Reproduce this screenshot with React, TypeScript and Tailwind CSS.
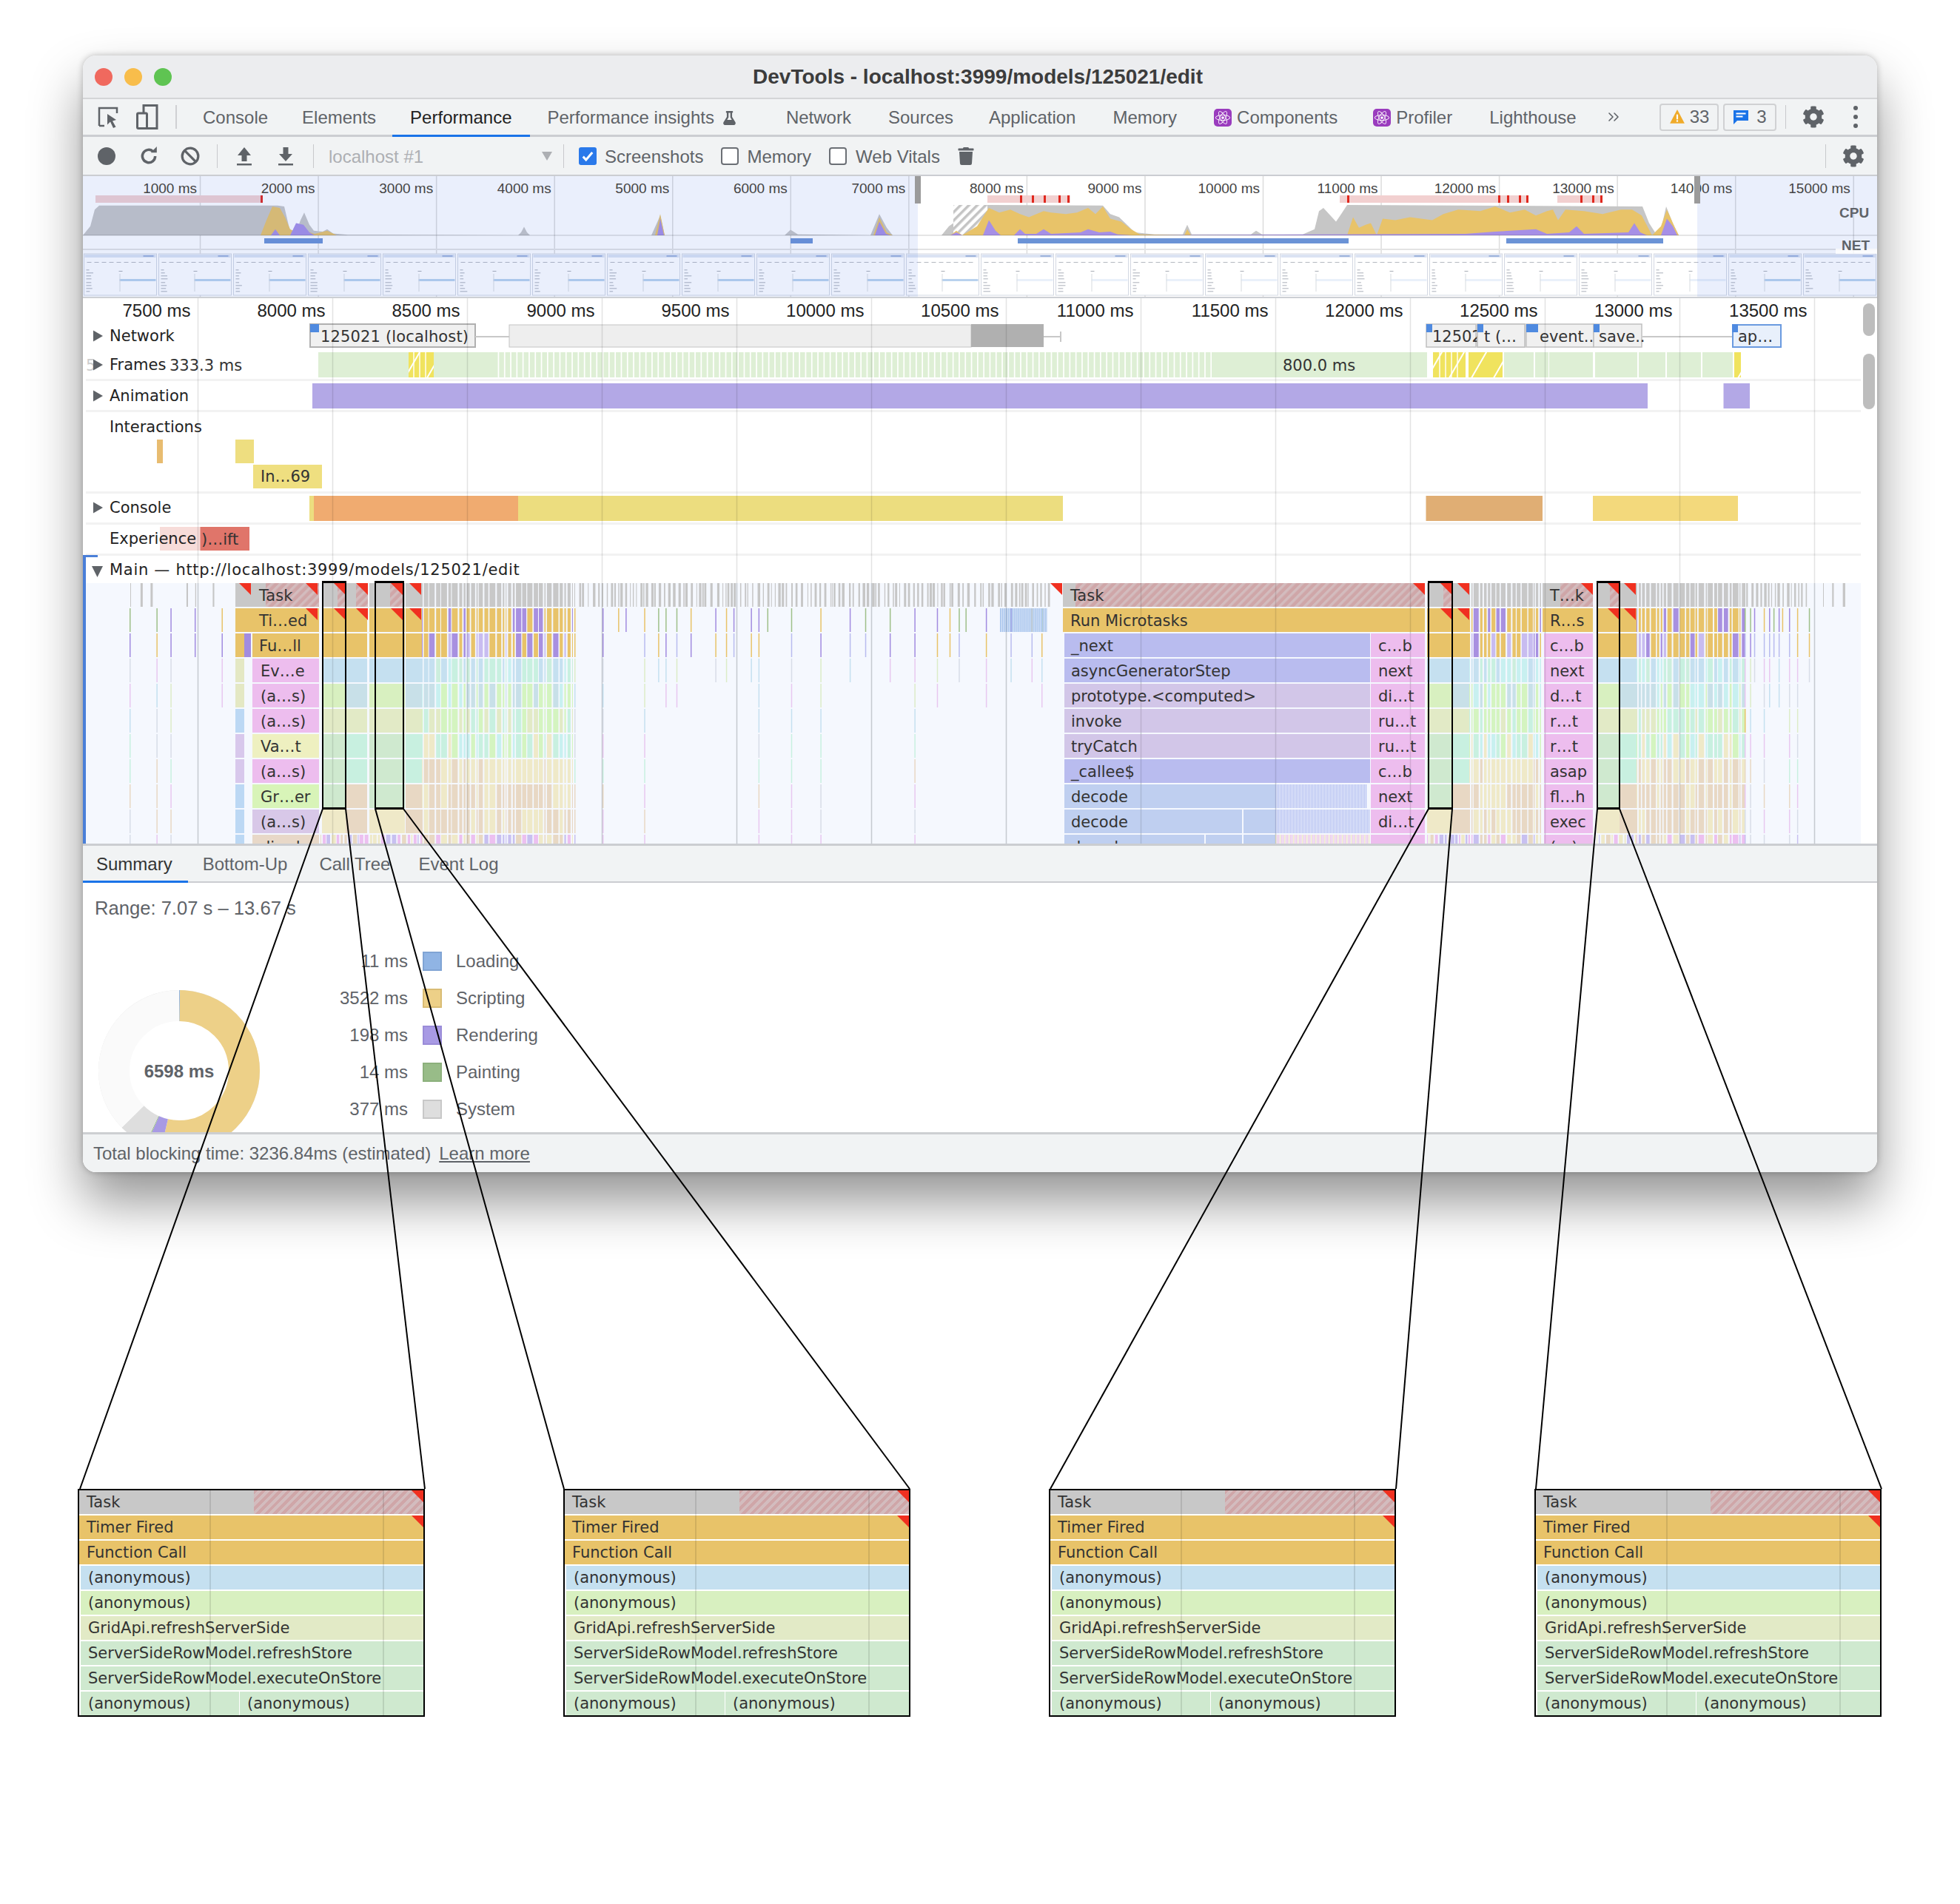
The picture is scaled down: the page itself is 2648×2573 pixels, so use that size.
import { FaCog, FaFlask, FaReact, FaTrash } from 'react-icons/fa';
import { ChevronsRight } from 'lucide-react';

// helpers for the timeline charts, all x/y in page pixels
const rowY = (r: number) => 788 + 34 * r;
const xs = (k: number) => 267.5 + 182 * k;

function rng(seed: number) {
  let s = seed;
  return () => {
    s = (s * 16807) % 2147483647;
    return (s - 1) / 2147483646;
  };
}

function area(pts: number[][], fill: string) {
  const p = pts.map(([x, f]) => `${x},${318 - f * 41}`).join(' ');
  return <polygon points={`${pts[0][0]},318 ${p} ${pts[pts.length - 1][0]},318`} fill={fill} />;
}

const GRAY = [[112, 0], [122, 0.3], [128, 0.85], [134, 0.98], [360, 0.98], [375, 0.98], [384, 0.95], [392, 0.12], [400, 0.1], [406, 0.5], [411, 0.75], [418, 0.35], [424, 0.15], [436, 0.12], [442, 0.2], [450, 0.06], [470, 0.02], [700, 0], [704, 0.1], [708, 0.28], [712, 0.1], [716, 0], [880, 0], [892, 0.65], [898, 0], [1060, 0], [1068, 0.18], [1078, 0.03], [1176, 0], [1188, 0.7], [1198, 0.25], [1206, 0], [1272, 0], [1282, 0.3], [1288, 0.4], [1334, 1], [1490, 0.98], [1500, 0.7], [1512, 0.6], [1533, 0.1], [1560, 0.03], [1598, 0.03], [1604, 0.35], [1610, 0.03], [1690, 0.03], [1697, 0.15], [1705, 0.03], [1760, 0.03], [1776, 0.2], [1782, 0.8], [1788, 0.9], [1805, 0.45], [1812, 0.7], [1820, 1], [2219, 0.95], [2228, 0.4], [2236, 0.1], [2245, 0.3], [2251, 0.95], [2260, 0.4], [2268, 0], [2536, 0]];
const YELLOW = [[352, 0], [360, 0.5], [368, 0.95], [378, 0.9], [385, 0.6], [392, 0.2], [400, 0.1], [405, 0.2], [412, 0.15], [425, 0.05], [442, 0.15], [455, 0], [885, 0], [892, 0.7], [898, 0], [1180, 0], [1188, 0.6], [1198, 0.1], [1206, 0], [1284, 0], [1292, 0.15], [1300, 0], [1320, 0.3], [1336, 0.9], [1350, 0.75], [1365, 0.85], [1378, 0.7], [1390, 0.6], [1410, 0.8], [1420, 0.75], [1440, 0.7], [1455, 0.75], [1470, 0.9], [1480, 0.7], [1490, 0.95], [1500, 0.55], [1515, 0.45], [1528, 0.2], [1540, 0.03], [1600, 0], [1604, 0.2], [1609, 0], [1820, 0], [1828, 0.6], [1836, 0.25], [1845, 0.35], [1852, 0.4], [1860, 0], [1868, 0.55], [1885, 0.5], [1905, 0.6], [1935, 0.5], [1950, 0.7], [1970, 0.85], [2000, 0.8], [2020, 0.95], [2040, 0.75], [2060, 0.85], [2075, 0.65], [2090, 0.8], [2098, 0.85], [2105, 0.5], [2115, 0.85], [2140, 0.8], [2165, 0.7], [2190, 0.85], [2205, 0.85], [2218, 0.65], [2232, 0], [2244, 0.3], [2252, 0.85], [2262, 0.3], [2268, 0]];
const PURPLE = [[366, 0], [372, 0.2], [378, 0], [392, 0], [400, 0.4], [410, 0.35], [418, 0.1], [425, 0], [888, 0], [892, 0.55], [897, 0], [1182, 0], [1188, 0.45], [1197, 0.05], [1203, 0], [1284, 0], [1292, 0.1], [1300, 0], [1328, 0], [1336, 0.5], [1345, 0.15], [1352, 0], [1370, 0], [1378, 0.2], [1385, 0.05], [1400, 0.05], [1410, 0.2], [1420, 0.05], [1460, 0.1], [1470, 0.2], [1485, 0.1], [1500, 0.12], [1510, 0.03], [1530, 0], [1980, 0.05], [2020, 0.12], [2075, 0.2], [2090, 0.05], [2120, 0.1], [2130, 0.3], [2140, 0.05], [2200, 0.1], [2208, 0.4], [2216, 0.1], [2225, 0], [2244, 0], [2252, 0.55], [2260, 0.3], [2266, 0]];

const LONG_TASKS = [[129, 355], [1334, 1446], [1810, 2064], [2104, 2163]];
const RED_MARKS = [352, 1378, 1394, 1410, 1430, 1442, 1820, 2024, 2036, 2052, 2062, 2135, 2151, 2162];

function Thumb({ x }: { x: number }) {
  const r = rng(Math.round(x) + 7);
  return (
    <g>
      <rect x={x} y={343} width={98} height={56} fill="#fff" stroke="#d3d8e2" strokeWidth={1} />
      <rect x={x + 1} y={344} width={96} height={4} fill="#dbe3f3" />
      <rect x={x + 80} y={345} width={14} height={2} fill="#9fb4dc" />
      {[0, 1, 2, 3, 4, 5, 6, 7, 8].map((i) => (
        <rect key={i} x={x + 4 + i * 10} y={354} width={6} height={1} fill="#b4b8c0" />
      ))}
      {[364, 368, 372, 376, 381, 385, 389, 393].map((y) => (
        <rect key={y} x={x + 3} y={y} width={4 + r() * 6} height={1.5} fill="#c6c9d0" />
      ))}
      <rect x={x + 47} y={366} width={5} height={1} fill="#a8acb4" />
      <rect x={x + 48} y={377} width={49} height={3} fill="#b9d2ee" opacity={x > 1240 && x < 2240 ? 0.3 : 1} />
      <rect x={x + 48} y={370} width={1} height={24} fill="#d8dbe0" />
    </g>
  );
}

function Overview() {
  const labels = [];
  for (let i = 1; i <= 15; i++) labels.push(i);
  const thumbs = [];
  for (let i = 0; i < 24; i++) thumbs.push(113.5 + i * 101);
  return (
    <svg viewBox="112 238 2424 165" className="block h-[165px] w-[2424px] shrink-0">
      <defs>
        <pattern id="gr" width="8" height="8" patternUnits="userSpaceOnUse" patternTransform="rotate(45)">
          <rect width="8" height="8" fill="#fff" />
          <rect width="3.5" height="8" fill="#c4c4c4" />
        </pattern>
      </defs>
      <rect x={112} y={238} width={2424} height={165} fill="#fff" />
      {labels.map((i) => (
        <line key={i} x1={111 + 159.55 * i} x2={111 + 159.55 * i} y1={238} y2={403} stroke="#dcdcdc" strokeWidth={1.5} />
      ))}
      {LONG_TASKS.map(([a, b]) => (
        <rect key={a} x={a} y={264} width={b - a} height={10} fill="#f2d0d0" />
      ))}
      {RED_MARKS.map((x) => (
        <rect key={x} x={x} y={264} width={3} height={10} fill="#e0281e" />
      ))}
      {area(GRAY, '#c6c6c6')}
      <rect x={1288} y={277} width={46} height={41} fill="url(#gr)" />
      {area(YELLOW, '#e8c369')}
      {area(PURPLE, '#a68fe6')}
      <rect x={112} y={317} width={2424} height={2} fill="#000" opacity={0.1} />
      {[[357, 436], [1068, 1098], [1375, 1822], [2035, 2247]].map(([a, b]) => (
        <rect key={a} x={a} y={322} width={b - a} height={7} fill="#6b93d6" />
      ))}
      <rect x={112} y={336} width={2424} height={2} fill="#e3e3e3" />
      {thumbs.map((x) => (
        <Thumb key={x} x={x} />
      ))}
      <rect x={112} y={238} width={1128} height={165} fill="#3f71e0" opacity={0.11} />
      <rect x={2293} y={238} width={243} height={165} fill="#3f71e0" opacity={0.11} />
      <rect x={112} y={401} width={2424} height={2} fill="#cdd0d4" />
      <g className="fill-[#444] text-[19px]">
        {labels.map((i) => (
          <text key={i} x={111 + 159.55 * i - 4.5} y={261} textAnchor="end">
            {i * 1000} ms
          </text>
        ))}
      </g>
      <rect x={1236} y={238} width={8} height={37} fill="#9b9b9b" />
      <rect x={2289} y={238} width={8} height={37} fill="#9b9b9b" />
      <rect x={2480} y={336} width={56} height={7} fill="#fff" opacity={0.8} />
      <g className="fill-[#5f6368] text-[19px] font-bold">
        <text x={2485} y={294}>CPU</text>
        <text x={2488} y={338}>NET</text>
      </g>
    </svg>
  );
}

type Bar = [number, number, number, string, string?];

const STACK_ROWS: [string, string][] = [
  ['#c8c8c8', '#c8c8c8'],
  ['#e8c369', '#e8c369'],
  ['#e8c369', '#e8c369'],
  ['#c5e0f0', '#c5e0f0'],
  ['#d8f0c0', '#c8e0e8'],
  ['#e2eac6', '#e2eac6'],
  ['#cfe9cf', '#c8f0e0'],
  ['#cfe9cf', '#c8f0e0'],
  ['#cfe9cf', '#e8d8c4'],
  ['#efe9c8', '#e8d8c4'],
];

function stack(x0: number, xm: number, x1: number): Bar[] {
  const out: Bar[] = [];
  STACK_ROWS.forEach(([a, b], r) => {
    if (xm > x0) out.push([x0, xm, r, a]);
    if (x1 > xm) out.push([xm, x1, r, b]);
  });
  return out;
}

const LEFT_COL: Bar[] = [
  [318, 431, 0, '#c8c8c8'],
  [318, 431, 1, '#e8c369'],
  [318, 330, 2, '#e8c369'],
  [330, 339, 2, '#a28ce0'],
  [341, 431, 2, '#e8c369'],
  [318, 330, 3, '#e4e8c4'],
  [318, 330, 4, '#e4e8c4'],
  [318, 330, 5, '#bcd8f4'],
  [318, 330, 6, '#d8c8ec'],
  [318, 330, 7, '#d8c8ec'],
  [318, 330, 8, '#bcd8f4'],
  [318, 330, 9, '#bcd8f4'],
  [318, 330, 10, '#bcd8f4'],
  [341, 431, 3, '#edbdee'],
  [341, 431, 4, '#edbdee'],
  [341, 431, 5, '#edbdee'],
  [341, 431, 6, '#eef0c0'],
  [341, 431, 7, '#edbdee'],
  [341, 431, 8, '#d8f4b8'],
  [341, 431, 9, '#d8c8e8'],
  [341, 431, 10, '#e8d8c8'],
];

const MID_COL: Bar[] = [
  [1436, 1925, 0, '#c8c8c8'],
  [1436, 1925, 1, '#e8c369'],
  [1438, 1851, 2, '#b9bcef'],
  [1438, 1851, 3, '#b9bcef'],
  [1438, 1851, 4, '#d2c6e8'],
  [1438, 1851, 5, '#d2c6e8'],
  [1438, 1851, 6, '#d2c6e8'],
  [1438, 1851, 7, '#b9bcef'],
  [1438, 1723, 8, '#bfcff0'],
  [1438, 1678, 9, '#bfcff0'],
  [1680, 1723, 9, '#bfcff0'],
  [1438, 1627, 10, '#bfcff0'],
  [1629, 1678, 10, '#bfcff0'],
  [1680, 1723, 10, '#bfcff0'],
  [1852, 1925, 2, '#edbdee'],
  [1852, 1925, 3, '#edbdee'],
  [1852, 1925, 4, '#edbdee'],
  [1852, 1925, 5, '#edbdee'],
  [1852, 1925, 6, '#edbdee'],
  [1852, 1925, 7, '#edbdee'],
  [1852, 1925, 8, '#edbdee'],
  [1852, 1925, 9, '#edbdee'],
  [1852, 1925, 10, '#edbdee'],
];

const RIGHT_COL: Bar[] = [
  [2084, 2152, 0, '#c8c8c8'],
  [2084, 2152, 1, '#e8c369'],
  ...[2, 3, 4, 5, 6, 7, 8, 9, 10].map((r): Bar => [2086, 2152, r, '#edbdee']),
];

const FLAME_TEXT: [number, number, string][] = [
  [350, 0, 'Task'], [350, 1, 'Ti…ed'], [350, 2, 'Fu…ll'], [352, 3, 'Ev…e'], [352, 4, '(a…s)'], [352, 5, '(a…s)'], [352, 6, 'Va…t'], [352, 7, '(a…s)'], [352, 8, 'Gr…er'], [352, 9, '(a…s)'], [352, 10, 'di…d'],
  [1446, 0, 'Task'], [1446, 1, 'Run Microtasks'], [1447, 2, '_next'], [1447, 3, 'asyncGeneratorStep'], [1447, 4, 'prototype.<computed>'], [1447, 5, 'invoke'], [1447, 6, 'tryCatch'], [1447, 7, '_callee$'], [1447, 8, 'decode'], [1447, 9, 'decode'], [1447, 10, 'decode'],
  [1862, 2, 'c…b'], [1862, 3, 'next'], [1862, 4, 'di…t'], [1862, 5, 'ru…t'], [1862, 6, 'ru…t'], [1862, 7, 'c…b'], [1862, 8, 'next'], [1862, 9, 'di…t'], [1862, 10, 'a…c'],
  [2094, 0, 'T…k'], [2094, 1, 'R…s'], [2094, 2, 'c…b'], [2094, 3, 'next'], [2094, 4, 'd…t'], [2094, 5, 'r…t'], [2094, 6, 'r…t'], [2094, 7, 'asap'], [2094, 8, 'fl…h'], [2094, 9, 'exec'], [2094, 10, '(…)'],
];

const DENSE_PALETTE: string[][] = [
  ['#c8c8c8'],
  ['#e8c369', '#e8c369', '#e8c369', '#e8c369', '#a890e0'],
  ['#e8c369', '#e8c369', '#e8c369', '#a890e0', '#c8bcf0'],
  ['#c5e0f0', '#c8f0e0', '#c8f0f0', '#cceedd'],
  ['#c8e0e8', '#d4f4c0', '#c8f0f0', '#d4f4c0'],
  ['#d4f4c0', '#c8f0e0', '#e2eac6', '#d4f4c0'],
  ['#d4f4c0', '#c8f0e0', '#c8f0f0', '#efe9c8'],
  ['#efe9c8', '#e8d8c4', '#efe9c8'],
  ['#e8d8c4', '#efe9c8', '#e8d8c4'],
  ['#e8d8c4', '#efe9c8', '#e8d8c4'],
  ['#ecc0f0', '#c8c0f0', '#efe9c8', '#e8d8c4'],
];

// vertically aligned thin slices, like the small tasks in a flame chart
function denseSlices(seed: number, x0: number, x1: number, maxW: number, depth: number) {
  const r = rng(seed);
  const out: Bar[] = [];
  let x = x0;
  while (x < x1) {
    const w = 1 + r() * maxW;
    const d = depth > 10 ? 11 : Math.floor(depth * (0.4 + r() * 0.6));
    for (let row = 0; row < d; row++) {
      const pal = DENSE_PALETTE[row];
      out.push([x, Math.min(x + w, x1), row, pal[Math.floor(r() * pal.length)]]);
    }
    x += w + 1 + r() * 1.2;
  }
  return out;
}

const SPARSE_PALETTE: string[][] = [
  ['#c4c4c4'],
  ['#e8c369', '#9fc08a', '#a28ce0'],
  ['#a28ce0', '#e8c369', '#b9bcef'],
  ['#d8dde8', '#c5e0f0', '#dcecc8', '#e8c8f0'],
  ['#d8dde8', '#c5e0f0', '#dcecc8', '#e8c8f0'],
  ['#d8dde8', '#c5e0f0', '#dcecc8', '#e8c369'],
  ['#d8dde8', '#c8f0e0', '#e8c8f0'],
  ['#d8dde8', '#c8f0e0', '#e8d8c4'],
  ['#d8dde8', '#e8d8c4', '#e8c8f0'],
  ['#d8dde8', '#e8d8c4', '#e8c8f0'],
  ['#d8dde8', '#e8c8f0', '#c8c0f0'],
];

function sparseSlices(seed: number, x0: number, x1: number, step: number) {
  const r = rng(seed);
  const out: Bar[] = [];
  let x = x0;
  while (x < x1) {
    const d = r() < 0.4 ? 11 : 2 + Math.floor(r() * 4);
    for (let row = 1; row < d; row++) {
      const pal = SPARSE_PALETTE[row];
      out.push([x, x + 1.5, row, pal[Math.floor(r() * pal.length)]]);
    }
    x += step * (0.4 + r() * 1.4);
  }
  return out;
}

// the Task row is far busier than the rows below it
function taskLines(seed: number, x0: number, x1: number, step: number) {
  const r = rng(seed);
  const out: Bar[] = [];
  let x = x0;
  while (x < x1) {
    const w = 1 + r() * 2.5;
    out.push([x, x + w, 0, '#c6c6c6']);
    x += w + step * (0.2 + r() * 1.6);
  }
  return out;
}

const onlyRow10 = (bars: Bar[]) => bars.filter((b) => b[2] === 10);

const FLAME_BARS: Bar[] = [
  ...taskLines(9, 176, 300, 26),
  ...sparseSlices(11, 175, 300, 26),
  ...LEFT_COL,
  ...stack(435, 467, 496),
  ...stack(499, 547, 547),
  ...stack(548, 548, 570),
  ...onlyRow10(denseSlices(19, 433, 570, 5, 11)),
  ...denseSlices(21, 570, 774, 7, 11),
  ...taskLines(22, 776, 1419, 3.4),
  ...sparseSlices(23, 776, 1420, 22),
  ...MID_COL,
  ...RIGHT_COL,
  ...stack(1928, 1962, 1985),
  ...stack(2157, 2188, 2211),
  ...onlyRow10(denseSlices(29, 1928, 1985, 5, 11)),
  ...onlyRow10(denseSlices(30, 2157, 2211, 5, 11)),
  ...denseSlices(31, 1985, 2082, 7, 11),
  ...denseSlices(37, 2211, 2357, 7, 11),
  ...taskLines(39, 2357, 2445, 3),
  ...sparseSlices(41, 2357, 2449, 9),
  ...taskLines(43, 2463, 2493, 9),
];

const TRIANGLES = [[339, 0], [429, 0], [429, 1], [467, 0], [467, 1], [497, 0], [497, 1], [544, 0], [544, 1], [569, 0], [569, 1], [1435, 0], [1925, 0], [1962, 0], [1962, 1], [1985, 0], [1985, 1], [2152, 0], [2188, 0], [2188, 1], [2210, 0], [2210, 1]];
const HATCHES = [[359, 431], [456, 467], [481, 497], [527, 544], [1453, 1925], [1950, 1962], [2108, 2152], [2175, 2188]];

function TrackLabel({ y, label, open, x = 148 }: { y: number; label: string; open?: boolean; x?: number }) {
  return (
    <g>
      {open === false && <polygon points={`126,${y - 7.5} 139,${y} 126,${y + 7.5}`} fill="#5f6368" />}
      {open === true && <polygon points={`124,${y - 5} 139,${y - 5} 131.5,${y + 10}`} fill="#5f6368" />}
      <text x={x} y={y + 7} fill="#222">{label}</text>
    </g>
  );
}

function Timeline() {
  const grid = [];
  for (let k = 0; k <= 12; k++) grid.push(xs(k));
  const seps = [513, 555, 665, 707, 749];
  const frameStripes = [];
  for (let x = 666; x < 1637; x += 8.3) frameStripes.push(x);
  return (
    <svg viewBox="112 403 2424 737" className="block h-[737px] w-[2424px] shrink-0">
      <defs>
        <pattern id="hatch" width="8" height="8" patternUnits="userSpaceOnUse" patternTransform="rotate(45)">
          <rect width="8" height="8" fill="#cfa6a8" />
          <rect width="3.5" height="8" fill="#d3bcbe" />
        </pattern>
        <pattern id="ylw" width="26" height="26" patternUnits="userSpaceOnUse" patternTransform="rotate(30)">
          <rect width="26" height="26" fill="#f0e35e" />
          <rect width="2" height="26" fill="#fff" />
        </pattern>
      </defs>
      <rect x={112} y={403} width={2424} height={737} fill="#fff" />

      {/* tracks */}
      <rect x={419} y={438} width={223} height={31} fill="#f0f0f0" stroke="#b0b0b0" strokeWidth={2} />
      <rect x={642} y={454} width={46} height={2} fill="#c8c8c8" />
      <rect x={688} y={439} width={624} height={30} fill="#eeeeee" stroke="#c4c4c4" strokeWidth={1} />
      <rect x={1312} y={438} width={98} height={31} fill="#b0b0b0" />
      <rect x={1410} y={454} width={23} height={2} fill="#c8c8c8" />
      <rect x={1432} y={448} width={2} height={14} fill="#c8c8c8" />
      {[[1927, 67], [1996, 64], [2062, 91], [2153, 65]].map(([x, w]) => (
        <rect key={x} x={x} y={438} width={w} height={31} fill="#f0f0f0" stroke="#c0c0c0" strokeWidth={1.5} />
      ))}
      <rect x={2219} y={454} width={121} height={2} fill="#c8c8c8" />
      <rect x={2341} y={439} width={65} height={30} fill="#e8f0fb" stroke="#6a9ae0" strokeWidth={2} />
      {[[419, 12], [1927, 8], [1996, 8], [2062, 16], [2153, 8], [2340, 8]].map(([x, w]) => (
        <rect key={x} x={x} y={438} width={w} height={11} fill="#4f8ae0" />
      ))}

      <rect x={430} y={476} width={122} height={34} fill="#deefd5" />
      <rect x={586} y={476} width={80} height={34} fill="#deefd5" />
      <rect x={552} y={476} width={34} height={34} fill="url(#ylw)" />
      {frameStripes.map((x) => (
        <rect key={x} x={x} y={476} width={6.6} height={34} fill="#deefd5" />
      ))}
      <rect x={1637} y={476} width={291} height={34} fill="#deefd5" />
      <rect x={1936} y={476} width={44} height={34} fill="url(#ylw)" />
      {[1944, 1952, 1960, 1968].map((x) => (
        <rect key={x} x={x} y={476} width={2} height={34} fill="#fff" opacity={0.7} />
      ))}
      {[558, 566, 574].map((x) => (
        <rect key={x} x={x} y={476} width={2} height={34} fill="#fff" opacity={0.7} />
      ))}
      <rect x={1984} y={476} width={46} height={34} fill="url(#ylw)" />
      {[[2032, 40], [2074, 18], [2093, 59], [2155, 57], [2214, 36], [2252, 46], [2300, 41]].map(([x, w]) => (
        <rect key={x} x={x} y={476} width={w} height={34} fill="#deefd5" />
      ))}
      <rect x={2343} y={476} width={9} height={34} fill="url(#ylw)" />
      <rect x={422} y={518} width={1804} height={34} fill="#b3a8e6" />
      <rect x={2328.5} y={518} width={35.5} height={34} fill="#b3a8e6" />
      <rect x={212} y={594} width={8} height={32} fill="#e8bc70" />
      <rect x={318} y={594} width={25} height={32} fill="#eede80" />
      <rect x={342} y={628} width={93} height={32} fill="#efdf80" />
      <rect x={418} y={670} width={6} height={34} fill="#ecde80" />
      <rect x={424} y={670} width={276} height={34} fill="#f0ab70" />
      <rect x={700} y={670} width={736} height={34} fill="#ecdd7f" />
      <rect x={1926.5} y={670} width={157.5} height={34} fill="#e0ae74" />
      <rect x={2152} y={670} width={196} height={34} fill="#f3d97c" />
      <rect x={216} y={712} width={121} height={32} fill="#e0756a" />
      <rect x={216} y={712} width={54.5} height={32} fill="#fff" opacity={0.75} />
      {seps.map((y) => (
        <rect key={y} x={116} y={y - 1} width={2398} height={3} fill="#f2f2f2" />
      ))}

      {/* flame chart */}
      <rect x={116} y={788} width={2398} height={352} fill="#f5f8fe" />
      {grid.map((x) => (
        <line key={x} x1={x} x2={x} y1={788} y2={1140} stroke="#dfe3ea" strokeWidth={1.5} />
      ))}
      {FLAME_BARS.map(([a, b, r, fill], i) => (
        <rect key={i} x={a} y={rowY(r)} width={b - a} height={32} fill={fill} />
      ))}
      {[...Array(40).keys()].map((i) => (
        <rect key={i} x={1351 + i * 1.6} y={rowY(1)} width={1} height={32} fill="#9dbdea" />
      ))}
      {[...Array(62).keys()].map((i) => (
        <rect key={i} x={1723 + i * 2} y={rowY(8)} width={1.3} height={32} fill="#b9c4f2" />
      ))}
      {[...Array(64).keys()].map((i) => (
        <rect key={i} x={1723 + i * 2} y={rowY(9)} width={1.3} height={32} fill="#b9c4f2" />
      ))}
      {[...Array(64).keys()].map((i) => (
        <rect key={i} x={1723 + i * 2} y={rowY(10)} width={1.3} height={32} fill={i % 3 ? '#ecc8e8' : '#efe9c8'} />
      ))}
      {HATCHES.map(([a, b]) => (
        <rect key={a} x={a} y={rowY(0)} width={b - a} height={32} fill="url(#hatch)" />
      ))}
      {TRIANGLES.map(([x, r], i) => (
        <polygon key={i} points={`${x - 16},${rowY(r)} ${x},${rowY(r)} ${x},${rowY(r) + 16}`} fill="#f03020" />
      ))}

      {/* grid lines sit over the bars */}
      {grid.map((x) => (
        <line key={x} x1={x} x2={x} y1={403} y2={1140} stroke="#000" strokeOpacity={0.11} strokeWidth={1.5} />
      ))}

      <rect x={112} y={750} width={4} height={390} fill="#4a7fd8" />
      <rect x={112} y={750} width={20} height={3} fill="#4a7fd8" />

      {/* scrollbar */}
      <rect x={2517} y={410} width={16} height={44} rx={8} fill="#bdbdbd" />
      <rect x={2517} y={478} width={16} height={75} rx={8} fill="#bdbdbd" />

      {/* ruler */}
      <g className="fill-[#222] text-[24px]">
        {grid.map((x, k) => (
          <text key={x} x={x - 10} y={428} textAnchor="end">
            {7500 + k * 500} ms
          </text>
        ))}
      </g>

      <g className="font-['DejaVu_Sans',sans-serif] text-[21px]">
        <TrackLabel y={454} label="Network" open={false} />
        <text x={116} y={501} fill="#ccc">5</text>
        <rect x={126} y={484} width={101} height={22} fill="#fff" opacity={0.85} />
        <TrackLabel y={493} label="Frames" open={false} />
        <text x={229} y={501} fill="#333">333.3 ms</text>
        <TrackLabel y={535} label="Animation" open={false} />
        <TrackLabel y={577} label="Interactions" />
        <text x={352} y={651} fill="#333">In…69</text>
        <TrackLabel y={686} label="Console" open={false} />
        <TrackLabel y={728} label="Experience" />
        <text x={272} y={736} fill="#333">)…ift</text>
        <g className="tracking-[0.7px]">
          <TrackLabel y={770} label="Main — http://localhost:3999/models/125021/edit" open />
        </g>
        <g fill="#333">
          <text x={433} y={462} className="tracking-[0.15px]">125021 (localhost)</text>
          <text x={1935} y={462}>125021</text>
        </g>
        <rect x={1996} y={438} width={64} height={31} fill="#f0f0f0" stroke="#c0c0c0" strokeWidth={1.5} />
        <rect x={1996} y={438} width={8} height={11} fill="#4f8ae0" />
        <g fill="#333">
          <text x={2005} y={462}>t (…</text>
          <text x={2080} y={462}>event..</text>
          <text x={2160} y={462}>save..</text>
          <text x={2348} y={462}>ap…</text>
          <text x={1733} y={501}>800.0 ms</text>
          {FLAME_TEXT.map(([x, r, t], i) => (
            <text key={i} x={x} y={rowY(r) + 24}>{t}</text>
          ))}
        </g>
      </g>
    </svg>
  );
}

// [name, right padding]; the tab spacing in the picture isn't quite even
const TABS: [string, string][] = [
  ['Console', 'pr-[22px]'],
  ['Elements', 'pr-[22px]'],
  ['Performance', 'pr-[24px]'],
  ['Performance insights', 'pr-[43px]'],
  ['Network', 'pr-[26px]'],
  ['Sources', 'pr-[24px]'],
  ['Application', 'pr-[26px]'],
  ['Memory', 'pr-[26px]'],
  ['Components', 'pr-[24px]'],
  ['Profiler', 'pr-[26px]'],
  ['Lighthouse', 'pr-[24px]'],
];

function ReactBadge() {
  return (
    <span className="mr-[7px] flex h-[24px] w-[24px] items-center justify-center rounded-[5px] bg-[#9a3cbe] text-white">
      <FaReact size={20} />
    </span>
  );
}

function TopTabs() {
  return (
    <div className="flex h-[53px] shrink-0 items-center border-t-2 border-b-[3px] border-t-[#d4d5d7] border-b-[#cbcdd1] bg-[#f1f3f4] text-[24px] text-[#5f6368]">
      <svg viewBox="0 0 28 32" className="ml-[20px] h-[32px] w-[28px]" fill="none" stroke="#5f6368" strokeWidth="2.5">
        <path d="M2 28V4h24v7M2 28h7" />
        <path d="M13 12l12 8-5 1.5 4.5 8-3.5 1.5-4-8.5-4 4z" fill="#5f6368" stroke="none" />
      </svg>
      <svg viewBox="0 0 30 36" className="ml-[24px] h-[36px] w-[30px]" fill="none" stroke="#5f6368" strokeWidth="3">
        <path d="M10 12V2.5h18v31H10" />
        <rect x="1.5" y="13" width="13" height="20.5" rx="1.5" />
      </svg>
      <div className="ml-[23px] mr-[11px] h-[32px] w-[2px] bg-[#cfd0d3]" />
      {TABS.map(([t, pad]) => (
        <div
          key={t}
          className={`flex h-full items-center pt-[2px] pl-6 ${pad} ${t === 'Performance' ? 'relative text-[#222]' : ''}`}
        >
          {(t === 'Components' || t === 'Profiler') && <ReactBadge />}
          {t}
          {t === 'Performance insights' && <FaFlask size={19} className="ml-[11px] text-[#5f6368]" />}
          {t === 'Performance' && <div className="absolute right-0 -bottom-[3px] left-0 h-[3px] bg-[#1a73e8]" />}
        </div>
      ))}
      <ChevronsRight size={24} strokeWidth={1.6} className="ml-[14px]" />
      <div className="ml-[50px] flex h-[37px] items-center gap-[6px] rounded-[4px] border-2 border-[#d0d1d3] px-[11px]">
        <svg viewBox="0 0 20 20" className="h-[22px] w-[22px]">
          <path d="M10 1l9 17H1z" fill="#f0ab2a" />
          <rect x="9" y="7" width="2" height="6" fill="#fff" />
          <rect x="9" y="14" width="2" height="2" fill="#fff" />
        </svg>
        33
      </div>
      <div className="ml-[6px] flex h-[37px] items-center gap-[10px] rounded-[4px] border-2 border-[#d0d1d3] px-[11px]">
        <svg viewBox="0 0 22 22" className="h-[22px] w-[22px]">
          <path d="M1 2h20v14H6l-5 5z" fill="#1a73e8" />
          <rect x="4.5" y="5.5" width="13" height="2" fill="#fff" />
          <rect x="4.5" y="9.5" width="9" height="2" fill="#fff" />
        </svg>
        3
      </div>
      <div className="ml-[12px] h-[32px] w-[1px] bg-[#c8c9cc]" />
      <FaCog size={30} className="ml-[22px]" />
      <div className="ml-[39px] flex flex-col gap-[6px]">
        <span className="h-[6px] w-[6px] rounded-full bg-[#5f6368]" />
        <span className="h-[6px] w-[6px] rounded-full bg-[#5f6368]" />
        <span className="h-[6px] w-[6px] rounded-full bg-[#5f6368]" />
      </div>
    </div>
  );
}

function Check({ on }: { on?: boolean }) {
  return on ? (
    <span className="flex h-[24px] w-[24px] items-center justify-center rounded-[3px] bg-[#2a79ea]">
      <svg viewBox="0 0 16 16" className="h-[20px] w-[20px]" fill="none" stroke="#fff" strokeWidth="2.4">
        <path d="M3 8.5l3.2 3.5L13 4" />
      </svg>
    </span>
  ) : (
    <span className="h-[24px] w-[24px] rounded-[4px] border-2 border-[#6b6f75] bg-white" />
  );
}

function Toolbar() {
  return (
    <div className="flex h-[53px] shrink-0 items-center border-b-[2px] border-[#cbcdd1] bg-[#f1f3f4] text-[24px] text-[#5f6368]">
      <span className="ml-[20px] h-[24px] w-[24px] rounded-full bg-[#5f6368]" />
      <svg viewBox="0 0 24 24" className="ml-[32px] h-[26px] w-[26px]" fill="none" stroke="#5f6368" strokeWidth="3.2">
        <path d="M20 12a8 8 0 1 1-3-6.2" />
        <path d="M14.5 7.5h7.5V0z" fill="#5f6368" stroke="none" />
      </svg>
      <svg viewBox="0 0 24 24" className="ml-[30px] h-[26px] w-[26px]" fill="none" stroke="#5f6368" strokeWidth="3">
        <circle cx="12" cy="12" r="10" />
        <path d="M5 5l14 14" />
      </svg>
      <div className="ml-[23px] h-[32px] w-[1px] bg-[#c8c9cc]" />
      <svg viewBox="0 0 22 26" className="ml-[25px] h-[26px] w-[22px]" fill="#5f6368">
        <path d="M11 1l9 11h-5.5v8h-7v-8H2zM1 23h20v2.5H1z" />
      </svg>
      <svg viewBox="0 0 22 26" className="ml-[34px] h-[26px] w-[22px]" fill="#5f6368">
        <path d="M7.5 1h7v9H20l-9 10-9-10h5.5zM1 23h20v2.5H1z" />
      </svg>
      <div className="ml-[26px] h-[32px] w-[1px] bg-[#c8c9cc]" />
      <div className="ml-[20px] w-[288px] pt-[3px] text-[#adafb3]">localhost #1</div>
      <svg viewBox="0 0 14 12" className="h-[12px] w-[14px]">
        <path d="M0 0h14L7 12z" fill="#adafb3" />
      </svg>
      <div className="ml-[15px] h-[32px] w-[1px] bg-[#c8c9cc]" />
      <div className="ml-[20px] flex items-center gap-[11px]"><Check on /><span className="pt-[3px]">Screenshots</span></div>
      <div className="ml-[24px] flex items-center gap-[11px]"><Check /><span className="pt-[3px]">Memory</span></div>
      <div className="ml-[24px] flex items-center gap-[12px]"><Check /><span className="pt-[3px]">Web Vitals</span></div>
      <FaTrash size={24} className="ml-[23px]" />
      <div className="ml-auto h-[32px] w-[1px] bg-[#c8c9cc]" />
      <FaCog size={30} className="ml-[22px] mr-[17px]" />
    </div>
  );
}

const LEGEND = [
  ['11 ms', 'Loading', 'bg-[#90b4e4] border-[#80a4d4]'],
  ['3522 ms', 'Scripting', 'bg-[#edd088] border-[#d9bc74]'],
  ['198 ms', 'Rendering', 'bg-[#a89ae4] border-[#9a8cd8]'],
  ['14 ms', 'Painting', 'bg-[#98bc88] border-[#8cb07c]'],
  ['377 ms', 'System', 'bg-[#dedede] border-[#c8c8c8]'],
];

function Donut() {
  const total = 6598;
  const segs: [number, string][] = [[11, '#90b4e4'], [3522, '#edd088'], [198, '#a89ae4'], [14, '#98bc88'], [377, '#dedede'], [2476, '#fafafa']];
  const r = 88;
  const c = 2 * Math.PI * r;
  let off = 0;
  return (
    <svg viewBox="-110 -110 220 220" className="h-[220px] w-[220px] shrink-0">
      <circle r={109} fill="#e4e4e4" />
      <circle r={108} fill="#fff" />
      <g transform="rotate(-90)">
        {segs.map(([v, col]) => {
          const len = (v / total) * c;
          const el = <circle key={col} r={r} fill="none" stroke={col} strokeWidth={42} strokeDasharray={`${len} ${c - len}`} strokeDashoffset={-off} />;
          off += len;
          return el;
        })}
      </g>
      <text y={9} textAnchor="middle" className="fill-[#5f6368] text-[24px] font-bold">6598 ms</text>
    </svg>
  );
}

function Details() {
  return (
    <div className="flex min-h-0 flex-1 flex-col overflow-hidden bg-white text-[24px] text-[#5f6368]">
      <div className="flex h-[53px] shrink-0 items-stretch border-t-[3px] border-b-[2px] border-t-[#cbcdd1] border-b-[#cbcdd1] bg-[#f1f3f4]">
        <div className="relative flex items-center pt-[2px] pr-[21px] pl-[18px] text-[#333]">
          Summary
          <div className="absolute right-0 -bottom-[2px] left-0 h-[3px] bg-[#1a73e8]" />
        </div>
        <div className="ml-[2px] flex items-center pt-[2px] pr-[23px] pl-[18px]">Bottom-Up</div>
        <div className="flex items-center pt-[2px] pr-[18px] pl-[20px]">Call Tree</div>
        <div className="flex items-center pt-[2px] pl-[20px]">Event Log</div>
      </div>
      <div className="flex min-h-0 flex-1 flex-col overflow-hidden">
        <div className="ml-[16px] mt-[21px] text-[25.6px] leading-[27px]">Range: 7.07 s – 13.67 s</div>
        <div className="flex">
          <div className="ml-[20px] mt-[96px]"><Donut /></div>
          <div className="ml-[0px] mt-[45px] flex flex-col gap-[24px]">
            {LEGEND.map(([v, l, c]) => (
              <div key={l} className="flex h-[26px] items-center">
                <span className="w-[199px] text-right">{v}</span>
                <span className={`ml-[20px] h-[26px] w-[26px] border-2 ${c}`} />
                <span className="ml-[19px]">{l}</span>
              </div>
            ))}
          </div>
        </div>
      </div>
      <div className="flex h-[54px] shrink-0 items-center border-t-[3px] border-[#cdcfd2] bg-[#f1f3f4] pl-[14px]">
        Total blocking time: 3236.84ms (estimated)
        <span className="ml-[11px] underline">Learn more</span>
      </div>
    </div>
  );
}

const PANEL_ROWS = [
  { t: 'Timer Fired', c: 'bg-[#e8c369]', tri: true },
  { t: 'Function Call', c: 'bg-[#e8c369]' },
  { t: '(anonymous)', c: 'ml-[2px] bg-[#c5e0f0]' },
  { t: '(anonymous)', c: 'ml-[2px] bg-[#d8f0c0]' },
  { t: 'GridApi.refreshServerSide', c: 'ml-[2px] bg-[#e2eac6]' },
  { t: 'ServerSideRowModel.refreshStore', c: 'ml-[2px] bg-[#cfe9cf]' },
  { t: 'ServerSideRowModel.executeOnStore', c: 'ml-[2px] bg-[#cfe9cf]' },
];

function Tri() {
  return <div className="absolute top-0 right-0 h-[16px] w-[16px] bg-[#f03020] [clip-path:polygon(0_0,100%_0,100%_100%)]" />;
}

function ZoomPanel() {
  return (
    <div className="relative flex h-[308px] w-[469px] shrink-0 flex-col gap-[2px] border-2 border-black bg-white font-['DejaVu_Sans',sans-serif] text-[21px] leading-[32px] text-[#333]">
      <div className="relative flex h-[32px] bg-[#c8c8c8]">
        <div className="w-[236px] pl-[10px]">Task</div>
        <div className="flex-1 bg-[repeating-linear-gradient(135deg,#cfa6a8_0px,#cfa6a8_4px,#d3bcbe_4px,#d3bcbe_8px)]" />
        <Tri />
      </div>
      {PANEL_ROWS.map((row) => (
        <div key={row.t + row.c} className={`relative h-[32px] pl-[10px] ${row.c}`}>
          {row.t}
          {row.tri && <Tri />}
        </div>
      ))}
      <div className="ml-[2px] flex h-[32px] gap-[1px]">
        <div className="w-[214px] bg-[#cfe9cf] pl-[10px]">(anonymous)</div>
        <div className="flex-1 bg-[#cfe9cf] pl-[10px]">(anonymous)</div>
      </div>
      <div className="absolute top-0 bottom-0 left-[176px] w-[2px] bg-black/10" />
      <div className="absolute top-0 bottom-0 left-[410px] w-[2px] bg-black/10" />
    </div>
  );
}

const CONNECTORS = [
  [436, 108], [467, 574], [507, 762], [545, 1229],
  [1930, 1419], [1962, 1886], [2158, 2075], [2188, 2542],
];
const FOCUS = [[436, 467], [507, 545], [1930, 1962], [2158, 2188]];

export default function App() {
  return (
    <div className="relative h-[2573px] w-[2648px] overflow-hidden bg-white font-['Liberation_Sans',Arial,sans-serif]">
      <div className="ml-[112px] pt-[75px]">
        <div className="flex h-[1509px] w-[2424px] flex-col overflow-hidden rounded-[18px] shadow-[0_40px_70px_rgba(0,0,0,0.42),0_0_8px_rgba(0,0,0,0.25)]">
          <div className="relative flex h-[57px] shrink-0 items-center justify-center bg-[#ecedef]">
            <div className="absolute top-[17px] left-[16px] flex gap-[16px]">
              <span className="h-[24px] w-[24px] rounded-full bg-[#f0695e]" />
              <span className="h-[24px] w-[24px] rounded-full bg-[#f8bd4b]" />
              <span className="h-[24px] w-[24px] rounded-full bg-[#5fc452]" />
            </div>
            <div className="ml-[-6px] text-[28px] font-bold text-[#3c3c3c]">DevTools - localhost:3999/models/125021/edit</div>
          </div>
          <TopTabs />
          <Toolbar />
          <Overview />
          <Timeline />
          <Details />
        </div>
      </div>
      <div className="mt-[428px] flex gap-[187px] pl-[105px]">
        <ZoomPanel />
        <ZoomPanel />
        <ZoomPanel />
        <ZoomPanel />
      </div>
      <svg viewBox="0 0 2648 2573" className="pointer-events-none absolute inset-0 h-[2573px] w-[2648px]">
        {CONNECTORS.map(([a, b]) => (
          <line key={a} x1={a} y1={1093} x2={b} y2={2012} stroke="#000" strokeWidth={2} />
        ))}
        {FOCUS.map(([a, b]) => (
          <g key={a}>
            <rect x={a} y={787} width={b - a} height={306} fill="none" stroke="#000" strokeWidth={2} />
            <rect x={a - 1} y={785} width={b - a + 2} height={3} fill="#000" />
            <rect x={a - 1} y={1091} width={b - a + 2} height={3} fill="#000" />
          </g>
        ))}
      </svg>
    </div>
  );
}
